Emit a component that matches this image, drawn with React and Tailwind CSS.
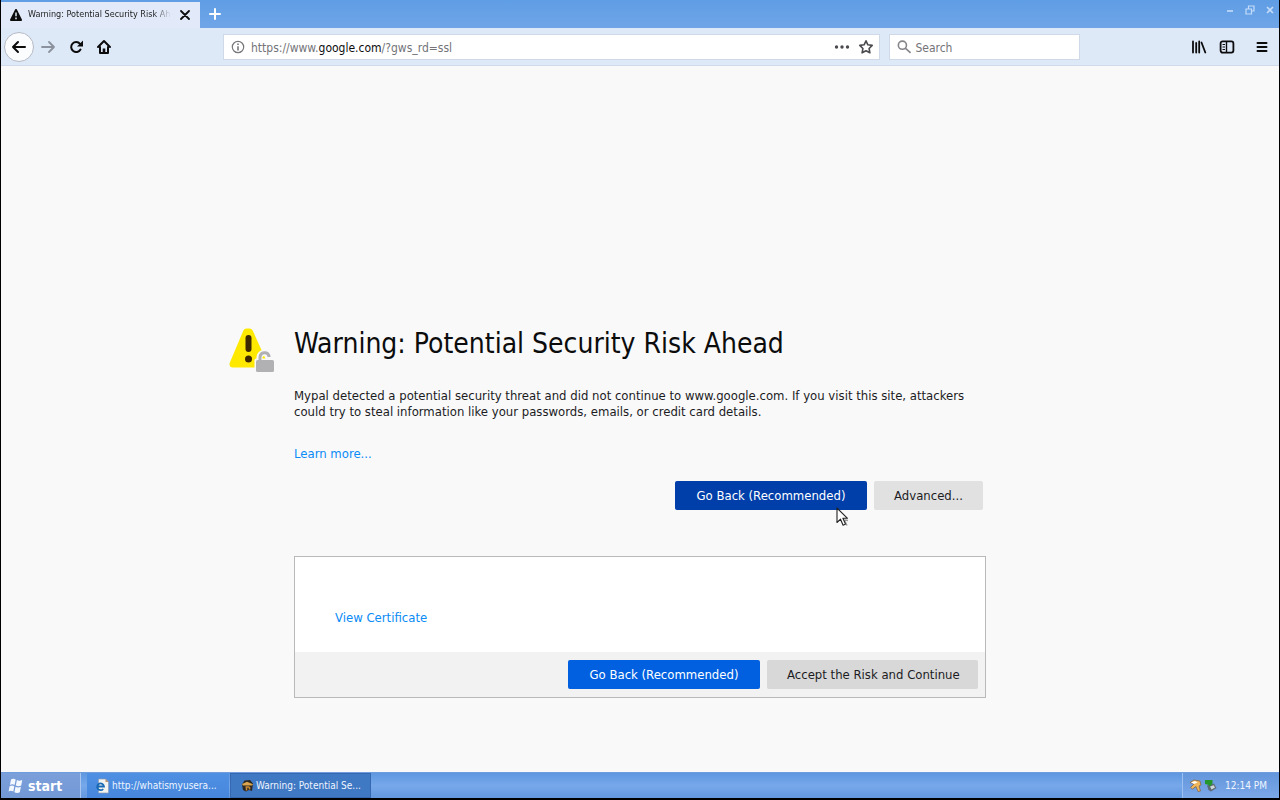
const UI_FONT = "font-['DejaVu_Sans_Condensed','Noto_Sans',sans-serif]";

const IconButton = ({ label, className = '', children }) => (
  <button aria-label={label} className={`flex items-center justify-center shrink-0 ${className}`}>
    {children}
  </button>
);

const BackIcon = () => (
  <svg width="16" height="16" viewBox="0 0 16 16" fill="none" stroke="currentColor" strokeWidth="2" strokeLinecap="round" strokeLinejoin="round">
    <path d="M14 8H2M7 3 2 8l5 5" />
  </svg>
);

const ForwardIcon = () => (
  <svg width="16" height="16" viewBox="0 0 16 16" fill="none" stroke="currentColor" strokeWidth="1.800" strokeLinecap="round" strokeLinejoin="round">
    <path d="M2 8h12M9 3l5 5-5 5" />
  </svg>
);

const ReloadIcon = () => (
  <svg width="16" height="16" viewBox="0 0 16 16" fill="none">
    <path d="M12 4.800A5 5 0 1 0 12.500 10.500" stroke="currentColor" strokeWidth="2" strokeLinecap="round" />
    <path d="M15 1.500v6H9z" fill="currentColor" />
  </svg>
);

const HomeIcon = () => (
  <svg width="16" height="16" viewBox="0 0 16 16" fill="none" stroke="currentColor" strokeWidth="2" strokeLinecap="round" strokeLinejoin="round">
    <path d="M2 8 8 2 14 8" />
    <path d="M4 8v6h8V8" />
    <path d="M8 14V9.500" strokeWidth="2.600" strokeLinecap="butt" />
  </svg>
);

const InfoIcon = () => (
  <svg width="14" height="14" viewBox="0 0 14 14" fill="none" stroke="#77777b" strokeWidth="1.200">
    <circle cx="7" cy="7" r="5.700" />
    <path d="M7 6.200v4.200M7 3.400v1.700" strokeWidth="1.600" />
  </svg>
);

const StarIcon = () => (
  <svg width="16" height="16" viewBox="0 0 16 16" fill="none" stroke="#4a4a4f" strokeWidth="1.600" strokeLinejoin="round">
    <path d="m8 1.800 1.900 4 4.300.6-3.100 3.100.8 4.300L8 11.700l-3.900 2.100.8-4.300-3.100-3.100 4.300-.6z" />
  </svg>
);

const SearchIcon = () => (
  <svg width="16" height="16" viewBox="0 0 16 16" fill="none" stroke="#85858a" strokeWidth="1.800" strokeLinecap="round">
    <circle cx="6" cy="6" r="4.500" />
    <path d="m9.500 9.500 5 4.500" />
  </svg>
);

const LibraryIcon = () => (
  <svg width="16" height="16" viewBox="0 0 16 16" fill="none" stroke="currentColor" strokeWidth="1.800" strokeLinecap="round">
    <path d="M2 2.500v11M5.200 4v9.500M8.200 2.500v11M10.500 3.500l3.800 10" />
  </svg>
);

const SidebarIcon = () => (
  <svg width="16" height="16" viewBox="0 0 16 16" fill="none" stroke="currentColor" strokeWidth="1.800">
    <rect x="1.600" y="2.400" width="12.800" height="11.200" rx="2" />
    <path d="M7.500 2.500v11" strokeWidth="1.400" />
    <path d="M3.500 5.500h2.500M3.500 8h2.500M3.500 10.500h2.500" strokeWidth="1.100" />
  </svg>
);

const MenuIcon = () => (
  <svg width="16" height="16" viewBox="0 0 16 16" stroke="currentColor" strokeWidth="2" strokeLinecap="round">
    <path d="M3.500 4h9M3.500 8h9M3.500 12h9" />
  </svg>
);

const TabWarningIcon = () => (
  <svg width="12" height="12" viewBox="0 0 12 12" className="shrink-0">
    <path d="M6 1 11 11H1z" fill="#0c0c0d" stroke="#0c0c0d" strokeWidth="2" strokeLinejoin="round" />
    <path d="M6 3.500v3.800M6 8.600v1.600" stroke="#e4ecf8" strokeWidth="1.500" />
  </svg>
);

const SecurityIcon = () => (
  <svg width="48" height="48" viewBox="0 0 48 48" aria-hidden="true">
    <path d="M18.500 6h3L36 38H5z" fill="#ffe900" stroke="#ffe900" strokeWidth="7" strokeLinejoin="round" />
    <path d="M20.500 12v11" stroke="#3e2800" strokeWidth="6" strokeLinecap="round" />
    <circle cx="20.500" cy="33" r="3.500" fill="#3e2800" />
    <path d="M31.500 36v-5a5 5 0 0 1 9-2" stroke="#f9f9fa" strokeWidth="6" fill="none" />
    <rect x="26.500" y="32.500" width="21" height="15" rx="2" fill="#f9f9fa" />
    <path d="M32 35v-4a4.600 4.600 0 0 1 9-1v1" stroke="#b1b1b3" strokeWidth="3" fill="none" />
    <rect x="28" y="34" width="18" height="12" rx="1.500" fill="#b1b1b3" />
  </svg>
);

const PointerIcon = () => (
  <svg width="14" height="20" viewBox="0 0 14 20" className="absolute left-[161px] top-[26px] pointer-events-none">
    <path d="m8 12.500 3 6M12 13.500l-3-.5" stroke="#999" strokeWidth="1.500" />
    <path d="M1 1v14.500l3.500-3.300 2.600 6 2.400-1.100-2.600-5.800h4.600z" fill="#fff" stroke="#222" strokeWidth="1.100" strokeLinejoin="round" />
  </svg>
);

const WindowsLogo = () => (
  <svg width="17" height="16" viewBox="0 0 17 16" fill="#f4f8ff" className="shrink-0">
    <path d="M4 1.500c1.700-1 3.200-.9 4.700.1L7.600 7c-1.500-1-3-1-4.700-.1z" />
    <path d="M9.900 2.100c1.600 1 3.200 1 5.400 0L14.200 7.600c-1.700.9-3.800.9-5.400-.1z" />
    <path d="M2.600 8.200c1.700-1 3.200-.9 4.700.1l-1 5.300c-1.500-1-3-1-4.700-.1z" />
    <path d="M8.500 8.800c1.600 1 3.700 1 5.400 0l-1.100 5.500c-1.700.9-3.800.9-5.400-.1z" />
  </svg>
);

const BrowserPageIcon = () => (
  <svg width="15" height="16" viewBox="0 0 15 16" className="shrink-0">
    <path d="M3.500 1h7l3 3v11h-10z" fill="#f3f3ef" stroke="#8a9bb5" strokeWidth=".7" />
    <path d="M10.500 1v3h3z" fill="#b98f6a" />
    <path d="M2.500 8.500h6.500A3.400 3.400 0 1 0 8.200 11" fill="none" stroke="#1769b5" strokeWidth="1.800" />
  </svg>
);

const MypalIcon = () => (
  <svg width="13" height="13" viewBox="0 0 13 13" className="shrink-0">
    <path d="M1 5.500 3.500 1.500 9 1l3 3.500-1 7.500-3-1-3 1.500-3-1.500z" fill="#2b2723" />
    <path d="M1 5 6 2.800 12 5.200 11 6.500H2z" fill="#dba54d" />
    <path d="M4.500 8h4M5.500 8v3.500M8.500 8v2.500" stroke="#c98a36" strokeWidth="1.500" />
  </svg>
);

const TrayToolIcon = () => (
  <svg width="13" height="13" viewBox="0 0 13 13">
    <path d="M1 3.500 5 1l6 1 1 4-2 1 1.500 5-2.500.5L7 7.500 3.500 10 1.500 8.500 5 5z" fill="#f0b65c" stroke="#805f3a" strokeWidth=".7" />
    <path d="m2 3.500 4-1.500 2.500 1.500L5 5z" fill="#fff" />
  </svg>
);

const TrayDeviceIcon = () => (
  <svg width="13" height="13" viewBox="0 0 13 13">
    <path d="m3 6.500 7-2 2.500 4.500L7 12.500 4.500 11z" fill="#5d6a73" />
    <path d="m6 7.500 3.700-1.200 1.300 2.200-3.500 2z" fill="#cfd6da" />
    <path d="M1 1h7.500v3.500L6 7.500 4.200 5.700 1 5z" fill="#23962e" />
  </svg>
);

const TitleBar = () => (
  <header className="flex h-7 items-stretch justify-between bg-linear-to-b from-[#5f9de4] to-[#6fa5e8]">
    <div className="flex">
      <div className="mt-0.5 flex w-[199px] items-center gap-1.5 bg-[#e2eaf9] pl-[9px] pr-[7px] text-[9px] text-[#222]">
        <TabWarningIcon />
        <span className="flex-1 overflow-hidden whitespace-nowrap mask-r-from-88% mask-r-to-100%">
          Warning: Potential Security Risk Ahead
        </span>
        <IconButton label="Close tab" className="size-4">
          <svg width="10" height="10" viewBox="0 0 10 10" stroke="#0c0c0d" strokeWidth="1.800" strokeLinecap="round">
            <path d="m1 1 8 8M9 1 1 9" />
          </svg>
        </IconButton>
      </div>
      <IconButton label="New tab" className="w-[30px]">
        <svg width="12" height="12" viewBox="0 0 12 12" stroke="#fff" strokeWidth="2" strokeLinecap="round">
          <path d="M6 1v10M1 6h10" />
        </svg>
      </IconButton>
    </div>
    <div className="flex h-5 items-center gap-1 pr-px text-[#c4dcfa]">
      <IconButton label="Minimize" className="size-4">
        <svg width="10" height="10" viewBox="0 0 10 10" stroke="currentColor" strokeWidth="1.600"><path d="M2 6h6" /></svg>
      </IconButton>
      <IconButton label="Restore" className="size-4">
        <svg width="10" height="10" viewBox="0 0 10 10" fill="none" stroke="currentColor" strokeWidth="1.200">
          <path d="M1 4h5.500v5H1zM3.500 3.500V1H9v5H7" />
        </svg>
      </IconButton>
      <IconButton label="Close" className="size-4">
        <svg width="10" height="10" viewBox="0 0 10 10" stroke="currentColor" strokeWidth="1.600"><path d="m2 2 6 6M8 2 2 8" /></svg>
      </IconButton>
    </div>
  </header>
);

const AddressField = () => (
  <div className="relative ml-1.5 flex-1 pt-0.5 leading-4">
    {/* the input's own text is hidden so the host name can be drawn darker */}
    <input aria-label="Address" defaultValue="https://www.google.com/?gws_rd=ssl" className="block w-full bg-transparent text-transparent caret-black outline-none" />
    <div aria-hidden="true" className="pointer-events-none absolute inset-0 pt-0.5 text-[#737378]">
      https://www.<span className="text-[#0c0c0d]">google.com</span>/?gws_rd=ssl
    </div>
  </div>
);

const Toolbar = () => (
  <nav className="flex h-[38px] items-center border-b border-[#cfdaea] bg-[#dee9f8] pl-[3px] pr-2 text-[#0c0c0d]">
    <IconButton label="Back" className="size-[30px] rounded-full border border-[#b5bac5] bg-[#fbfcfe]"><BackIcon /></IconButton>
    <IconButton label="Forward" className="size-7 text-[#8b919d]"><ForwardIcon /></IconButton>
    <IconButton label="Reload" className="size-7"><ReloadIcon /></IconButton>
    <IconButton label="Home" className="size-7"><HomeIcon /></IconButton>

    <div className="ml-[105px] mr-[9px] flex h-[26px] flex-1 items-center border border-[#d0d9e8] bg-white pl-[7px] pr-px text-xs">
      <InfoIcon />
      <AddressField />
      <IconButton label="Page actions" className="w-6">
        <svg width="16" height="16" viewBox="0 0 16 16" fill="#4a4a4f">
          <circle cx="2.500" cy="8" r="1.700" />
          <circle cx="8" cy="8" r="1.700" />
          <circle cx="13.500" cy="8" r="1.700" />
        </svg>
      </IconButton>
      <IconButton label="Bookmark this page" className="w-6"><StarIcon /></IconButton>
    </div>

    <label className="flex h-[26px] w-[191px] items-center gap-1 border border-[#d0d9e8] bg-white pl-[7px]">
      <SearchIcon />
      <input aria-label="Search" placeholder="Search" className="w-full bg-transparent pt-0.5 text-xs outline-none placeholder:text-[#737378]" />
    </label>

    <div className="ml-[105px] flex items-center">
      <IconButton label="Library" className="size-7"><LibraryIcon /></IconButton>
      <IconButton label="Sidebars" className="size-7"><SidebarIcon /></IconButton>
      <IconButton label="Open menu" className="ml-[7px] size-7 -mr-[5px]"><MenuIcon /></IconButton>
    </div>
  </nav>
);

const PageButton = ({ className, children }) => (
  <button className={`h-[29px] rounded-xs px-5 pt-0.5 text-[13px] whitespace-nowrap ${className}`}>{children}</button>
);

const WarningPage = () => (
  <main className="flex flex-1 flex-col items-center overflow-auto bg-[#f9f9fa] text-[13px] leading-4 text-[#1c1c1e]">
    <div className="grow-7" />
    <div className="grid grid-cols-[66px_minmax(0,692px)_66px]">
      <SecurityIcon />
      <div>
        <h1 className="text-[28px] leading-9 text-[#0c0c0d]">Warning: Potential Security Risk Ahead</h1>
        <p className="mt-[26px]">
          Mypal detected a potential security threat and did not continue to www.google.com. If you visit this site, attackers could try to steal information like your passwords, emails, or credit card details.
        </p>
        <a href="#learn" className="mt-[26px] block w-fit text-[#0a8bf5]">Learn more...</a>
        <div className="mt-[19px] flex justify-end gap-[7px] pr-[3px]">
          <div className="relative">
            <PageButton className="w-48 bg-[#003eaa] text-white">Go Back (Recommended)</PageButton>
            <PointerIcon />
          </div>
          <PageButton className="w-[109px] bg-[#e1e1e2]">Advanced...</PageButton>
        </div>

        <section className="mt-[46px] border border-[#b9b9bb] bg-white">
          <div className="px-10 pb-[26px] pt-[53px]">
            <a href="#certificate" className="block w-fit text-[#0a8bf5]">View Certificate</a>
          </div>
          <div className="flex justify-end gap-[7px] bg-[#f2f2f2] py-2 pr-[7px]">
            <PageButton className="w-48 bg-[#0060df] text-white">Go Back (Recommended)</PageButton>
            <PageButton className="w-[211px] bg-[#d8d8d9]">Accept the Risk and Continue</PageButton>
          </div>
        </section>
      </div>
    </div>
    <div className="grow-2" />
  </main>
);

const Taskbar = () => (
  <footer className="flex h-[26px] items-stretch border-t border-[#6f9cdc] bg-linear-to-b from-[#5f97e0] via-[#76a8ea] to-[#6398df] text-[10px] text-[#eef5ff]">
    <button className="mr-1.5 flex w-20 items-center gap-1 border-r border-[#a9c6f0] bg-linear-to-b from-[#7b9fd9] to-[#7298d6] pl-1.5 text-sm font-bold text-white">
      <WindowsLogo />
      start
    </button>
    <button className="flex w-[142px] items-center gap-0.5 bg-linear-to-b from-[#4f90e3] to-[#4687dd] pl-2 whitespace-nowrap">
      <BrowserPageIcon />
      http://whatismyusera...
    </button>
    <button className="ml-px flex w-[141px] items-center gap-0.5 border border-[#3568b0] bg-[#3f78c3] pl-2.5 whitespace-nowrap">
      <MypalIcon />
      Warning: Potential Se...
    </button>
    <div className="ml-auto flex items-center gap-0.5 border-l border-[#9dc0f2] bg-linear-to-b from-[#6496dc] to-[#7ba8e8] pl-1.5 pr-3">
      <TrayToolIcon />
      <TrayDeviceIcon />
      <span className="ml-1.5">12:14 PM</span>
    </div>
  </footer>
);

const App = () => (
  <div className={`flex h-screen flex-col border-x border-b-2 border-black bg-[#f9f9fa] ${UI_FONT}`}>
    <TitleBar />
    <Toolbar />
    <WarningPage />
    <Taskbar />
  </div>
);

export default App;
